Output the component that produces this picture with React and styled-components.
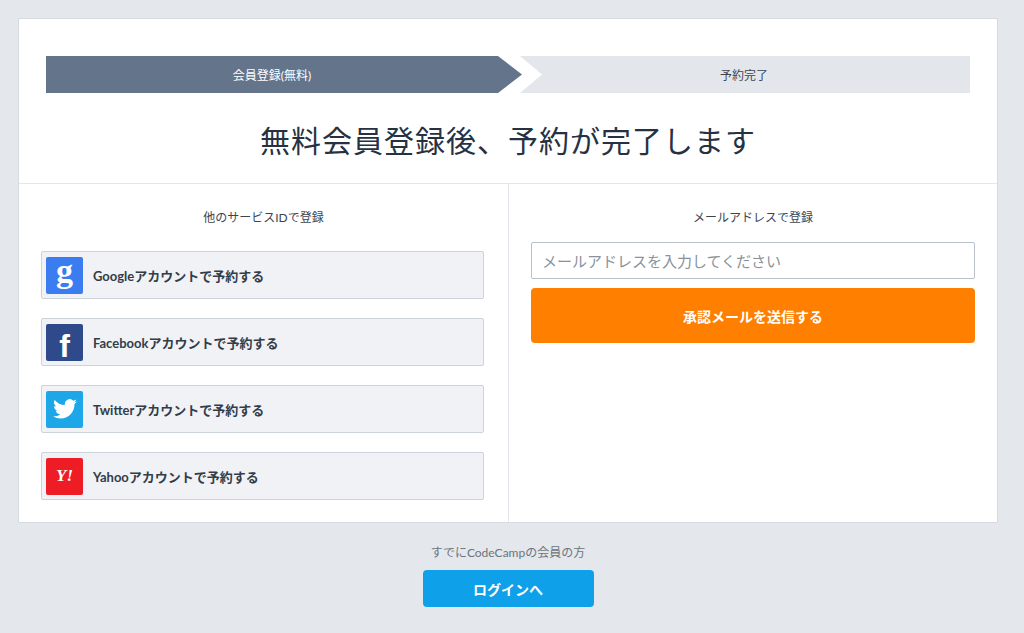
import React from "react";
import styled, { createGlobalStyle } from "styled-components";

const Global = createGlobalStyle`
  body {
    margin: 0;
    background: #e4e7eb;
    font-family: Lato, "Noto Sans CJK JP", sans-serif;
    color: #333d4a;
  }
`;

const Page = styled.div`
  padding: 18px 26px 28px 18px;
`;

const Card = styled.div`
  background: #fff;
  border: 1px solid #d6dbe1;
  width: 980px;
  box-sizing: border-box;
`;

const Head = styled.div`
  padding: 37px 27px 0 27px;
  border-bottom: 1px solid #e3e6ea;
`;

const Steps = styled.div`
  display: flex;
  height: 37px;
  background: #e3e7ec;
  position: relative;
`;

const Step = styled.div`
  flex: 1;
  display: flex;
  align-items: center;
  justify-content: center;
  font-size: 12px;
  background: ${(p) => (p.active ? "#64748a" : "transparent")};
  color: ${(p) => (p.active ? "#fff" : "#3b4550")};
  padding-left: ${(p) => (p.active ? "0" : "20px")};
  position: relative;
`;

const Arrow = styled.svg`
  position: absolute;
  left: 452px;
  top: 0;
`;

const Title = styled.h1`
  margin: 0;
  text-align: center;
  font-size: 30px;
  font-weight: 400;
  color: #263242;
  padding: 24px 0 22px;
  letter-spacing: 1px;
`;

const Columns = styled.div`
  display: grid;
  grid-template-columns: 489px 1fr;
`;

const Col = styled.div`
  padding: 24px 22px 22px;
  border-left: ${(p) => (p.right ? "1px solid #e3e6ea" : "none")};
`;

const ColTitle = styled.div`
  text-align: center;
  font-size: 12px;
  color: #3b4550;
  margin-bottom: ${(p) => p.mb}px;
`;

const SocialList = styled.div`
  display: flex;
  flex-direction: column;
  gap: 19px;
`;

const Social = styled.button`
  display: flex;
  align-items: center;
  gap: 10px;
  height: 48px;
  width: 443px;
  padding: 0 4px;
  box-sizing: border-box;
  background: #f0f2f6;
  border: 1px solid #cdd3da;
  border-radius: 2px;
  font-family: inherit;
  font-size: 13px;
  font-weight: 700;
  color: #333d4a;
  cursor: pointer;
`;

const Icon = styled.span`
  width: 37px;
  height: 37px;
  border-radius: 2px;
  background: ${(p) => p.bg};
  display: flex;
  align-items: center;
  justify-content: center;
  color: #fff;
  flex-shrink: 0;
`;

const Input = styled.input`
  width: 100%;
  height: 37px;
  box-sizing: border-box;
  border: 1px solid #b8c0c9;
  border-radius: 2px;
  padding: 0 10px;
  font-family: inherit;
  font-size: 15px;
  &::placeholder { color: #8a929b; }
`;

const Submit = styled.button`
  margin-top: 9px;
  width: 100%;
  height: 55px;
  border: none;
  border-radius: 4px;
  background: #ff7f00;
  color: #fff;
  font-family: inherit;
  font-size: 14px;
  font-weight: 700;
`;

const Footer = styled.div`
  display: flex;
  flex-direction: column;
  align-items: center;
  padding-top: 20px;
  width: 980px;
`;

const Small = styled.div`
  font-size: 12px;
  color: #6b7480;
  margin-bottom: 10px;
`;

const Login = styled.button`
  width: 171px;
  height: 37px;
  border: none;
  border-radius: 4px;
  background: #0fa0ea;
  color: #fff;
  font-family: inherit;
  font-size: 14px;
  font-weight: 700;
`;

const socials = [
  {
    name: "Google",
    bg: "#3b7cf0",
    icon: <span style={{ fontFamily: "Liberation Serif, serif", fontSize: 34, lineHeight: 1, marginTop: -8 }}>g</span>,
  },
  {
    name: "Facebook",
    bg: "#2f4a8b",
    icon: <span style={{ fontFamily: "Liberation Sans, sans-serif", fontWeight: 700, fontSize: 32, lineHeight: 1, marginTop: 8 }}>f</span>,
  },
  {
    name: "Twitter",
    bg: "#1da6e8",
    icon: (
      <svg width="24" height="20" viewBox="0 0 24 20" fill="#fff">
        <path d="M24 2.4c-.9.4-1.8.6-2.8.8 1-.6 1.8-1.6 2.2-2.7-1 .6-2 1-3.1 1.2A4.9 4.9 0 0 0 11.9 6 14 14 0 0 1 1.7.9a4.9 4.9 0 0 0 1.5 6.6c-.8 0-1.6-.3-2.2-.6 0 2.4 1.7 4.4 3.9 4.8-.7.2-1.5.2-2.2.1.6 2 2.4 3.4 4.6 3.4A9.9 9.9 0 0 1 0 17.3 14 14 0 0 0 7.5 19.5c9.1 0 14-7.5 14-14v-.6c1-.7 1.8-1.6 2.5-2.5z" />
      </svg>
    ),
  },
  {
    name: "Yahoo",
    bg: "#ee1c25",
    icon: <span style={{ fontFamily: "Liberation Serif, serif", fontWeight: 700, fontSize: 17, fontStyle: "italic" }}>Y!</span>,
  },
];

export default function App() {
  return (
    <Page>
      <Global />
      <Card>
        <Head>
          <Steps>
            <Step active>会員登録(無料)</Step>
            <Step>予約完了</Step>
            <Arrow width="44" height="37" viewBox="0 0 44 37">
              <polygon points="0,0 22,0 44,18.5 22,37 0,37" fill="#fff" />
              <polygon points="0,0 0,37 24,18.5" fill="#64748a" />
            </Arrow>
          </Steps>
          <Title>無料会員登録後、予約が完了します</Title>
        </Head>
        <Columns>
          <Col>
            <ColTitle mb={26}>他のサービスIDで登録</ColTitle>
            <SocialList>
              {socials.map((s) => (
                <Social key={s.name}>
                  <Icon bg={s.bg}>{s.icon}</Icon>
                  {s.name}アカウントで予約する
                </Social>
              ))}
            </SocialList>
          </Col>
          <Col right>
            <ColTitle mb={17}>メールアドレスで登録</ColTitle>
            <Input placeholder="メールアドレスを入力してください" />
            <Submit>承認メールを送信する</Submit>
          </Col>
        </Columns>
      </Card>
      <Footer>
        <Small>すでにCodeCampの会員の方</Small>
        <Login>ログインへ</Login>
      </Footer>
    </Page>
  );
}
